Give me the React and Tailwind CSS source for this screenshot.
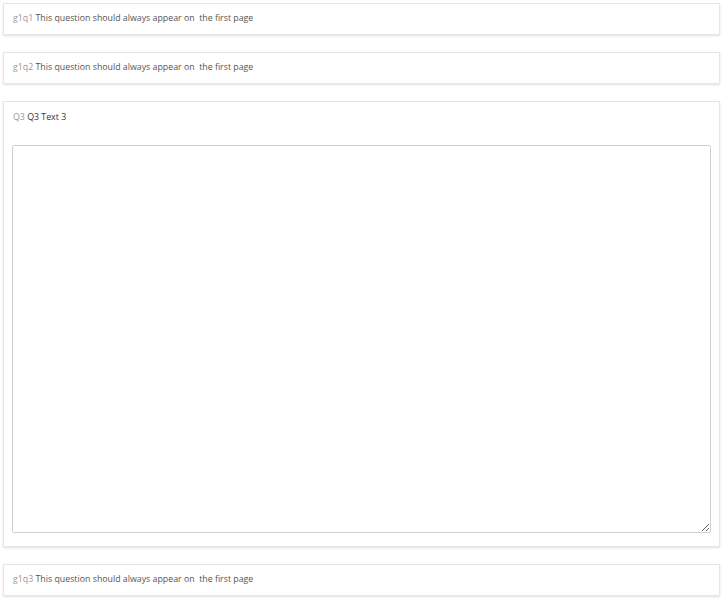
import React from 'react'

const questions = [
  { code: 'g1q1', text: 'This question should always appear on  the first page' },
  { code: 'g1q2', text: 'This question should always appear on  the first page' },
]

const QuestionCard = ({ code, text, children }) => (
  <div className="bg-white border border-[#e6e6e6] shadow-[0_1px_2px_rgba(0,0,0,0.12)] px-[9px]">
    <div className="h-[30px] flex items-center text-[8.8px] whitespace-pre">
      <span className="text-[#999]">{code}</span>
      <span className="text-[#555]"> {text}</span>
    </div>
    {children}
  </div>
)

const App = () => {
  return (
    <div
      className="bg-white min-h-[600px] pt-[3px] pl-[3px] pr-[4px] flex flex-col gap-[17px]"
      style={{ fontFamily: '"Open Sans", "Noto Sans", sans-serif' }}
    >
      {questions.map((q) => (
        <QuestionCard key={q.code} code={q.code} text={q.text} />
      ))}

      <div className="bg-white border border-[#e6e6e6] shadow-[0_1px_2px_rgba(0,0,0,0.12)] px-[8px] pb-[13px]">
        <div className="h-[31px] flex items-center pl-[1px] text-[8.8px] whitespace-pre">
          <span className="text-[#999]">Q3</span>
          <span className="text-[#333]"> Q3 Text 3</span>
        </div>
        <textarea className="block w-full h-[388px] mt-[12px] border border-[#cfcfcf] rounded-[2px] bg-white resize-y outline-none" />
      </div>

      <QuestionCard code="g1q3" text="This question should always appear on  the first page" />
    </div>
  )
}

export default App
